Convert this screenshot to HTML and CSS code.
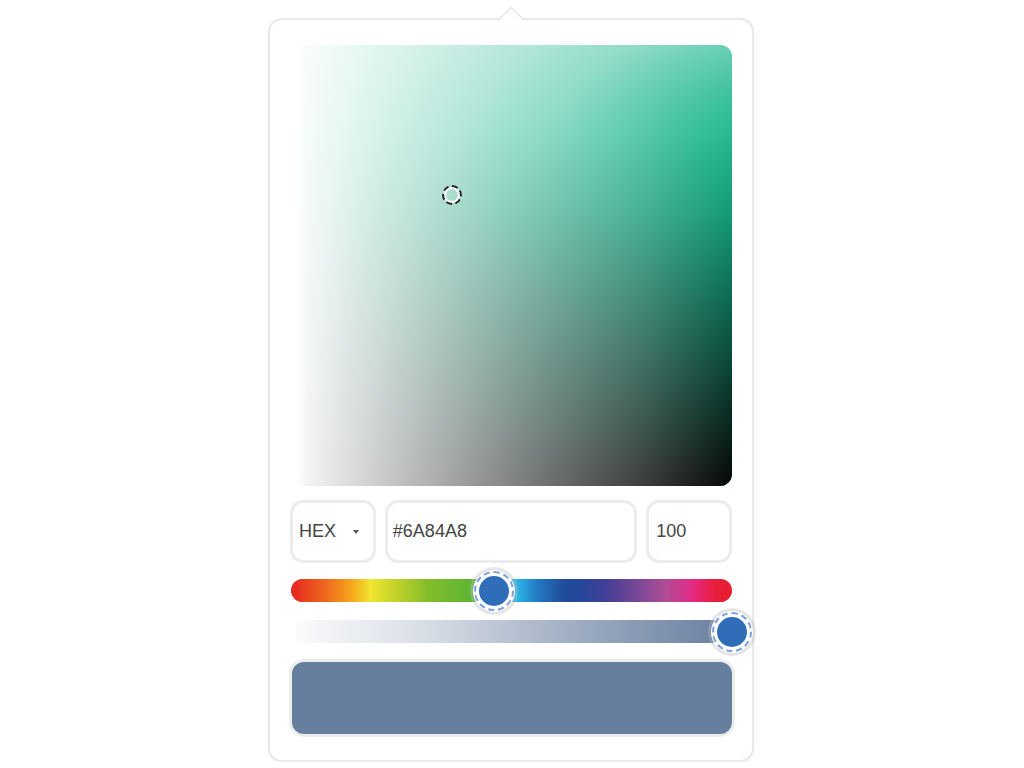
FILE: index.html
```html
<!DOCTYPE html>
<html>
<head>
<meta charset="utf-8">
<link rel="stylesheet" href="styles.css">
</head>
<body>
<div class="popover">
  <div class="arrow"></div>
  <div class="saturation">
    <div class="sat-layer sat-top"></div>
    <div class="sat-layer sat-peak"></div>
    <div class="sat-layer sat-black"></div>
    <div class="sat-layer sat-white"></div>
    <div class="sat-cursor" style="left: 156px; top: 150px;"></div>
  </div>
  <div class="inputs">
    <div class="field select"><span class="mode">HEX</span><span class="caret"></span></div>
    <div class="field hex">#6A84A8</div>
    <div class="field alpha">100</div>
  </div>
  <div class="slider hue">
    <div class="thumb" style="left: 46%;"></div>
  </div>
  <div class="slider alpha-track">
    <div class="thumb" style="left: 100%;"></div>
  </div>
  <div class="swatch"></div>
</div>
</body>
</html>
```

FILE: styles.css
```css
html, body {
  margin: 0;
  padding: 0;
  background: #ffffff;
  font-family: "Liberation Sans", Arial, sans-serif;
}

.popover {
  position: relative;
  box-sizing: border-box;
  width: 486px;
  height: 744px;
  margin: 18px auto 0 auto;
  left: -1px;
  border: 2px solid #e9e9e9;
  border-radius: 14px;
  background: #ffffff;
  box-shadow: 0 1px 3px rgba(0,0,0,0.06);
  padding: 25px 20px 26px 20px;
  display: flex;
  flex-direction: column;
}

.arrow {
  position: absolute;
  top: -10px;
  left: 231px;
  width: 18px;
  height: 18px;
  background: #ffffff;
  border-top: 2px solid #e9e9e9;
  border-left: 2px solid #e9e9e9;
  transform: rotate(45deg);
  border-top-left-radius: 3px;
}

.saturation {
  position: relative;
  height: 441px;
  margin-left: 6px;
  border-radius: 0 12px 12px 0;
  background: #14b48a;
  overflow: hidden;
}

.sat-layer {
  position: absolute;
  inset: 0;
}

.sat-top {
  background: linear-gradient(to bottom, rgba(255,255,255,0.38) 0%, rgba(255,255,255,0.15) 20%, rgba(255,255,255,0) 40%);
}

.sat-peak {
  background: radial-gradient(ellipse 35% 30% at 90% 28%, rgba(20,180,138,0.7) 0%, rgba(20,180,138,0) 100%);
}

.sat-black {
  background: linear-gradient(to top, #050505 0%, rgba(3,3,3,0.75) 18%, rgba(0,0,0,0.45) 40%, rgba(0,0,0,0.15) 62%, rgba(0,0,0,0) 80%);
}

.sat-white {
  background: linear-gradient(to right, #ffffff 0%, rgba(255,255,255,0.95) 3%, rgba(255,255,255,0.75) 24%, rgba(255,255,255,0.45) 55%, rgba(255,255,255,0.22) 80%, rgba(255,255,255,0) 100%);
}

.sat-cursor {
  position: absolute;
  width: 12px;
  height: 12px;
  border-radius: 50%;
  border: 2px solid #ffffff;
  outline: 2px dashed #222222;
  outline-offset: 0;
  transform: translate(-50%, -50%);
}

.inputs {
  display: flex;
  gap: 9px;
  margin-top: 14px;
  height: 63px;
}

.field {
  box-sizing: border-box;
  height: 63px;
  border: 3px solid #ececec;
  border-radius: 13px;
  display: flex;
  align-items: center;
  font-size: 18px;
  color: #444444;
  background: #ffffff;
}

.select {
  width: 86px;
  padding: 0 14px 0 6px;
  justify-content: space-between;
}

.caret {
  width: 0;
  height: 0;
  border-left: 3px solid transparent;
  border-right: 3px solid transparent;
  border-top: 4px solid #555555;
}

.hex {
  width: 253px;
  padding-left: 5px;
}

.alpha {
  width: 86px;
  padding-left: 7px;
}

.slider {
  position: relative;
  height: 23px;
  border-radius: 12px;
}

.hue {
  margin-top: 16px;
  margin-left: 1px;
  background: linear-gradient(to right,
    #e52421 0%, #ee6a1c 8%, #f6a91d 14%, #f1e530 18%,
    #c0d22b 24%, #83bd2a 31%, #61b632 40%, #6ab94e 44%,
    #4cb7a6 48%, #2cb7e8 51%, #2379c2 56%, #1f4b98 62%,
    #25469a 66%, #463f95 72%, #7c4896 79%, #b14c96 85%,
    #e32a84 91%, #e81d3f 96%, #e81d2a 100%);
}

.alpha-track {
  margin-top: 18px;
  margin-left: 6px;
  border-radius: 0 12px 12px 0;
  background: linear-gradient(to right, #fbfcfd 0%, #eef0f4 10%, #dfe4ea 25%, #bfc8d6 45%, #95a5bc 70%, #677f9f 100%);
}

.thumb {
  position: absolute;
  top: 50%;
  box-sizing: border-box;
  width: 42px;
  height: 42px;
  border-radius: 50%;
  background: #2f6db8;
  border: 6px solid #ffffff;
  outline: 2px dashed #7a9fdc;
  outline-offset: -3px;
  box-shadow: 0 0 0 3px rgba(200,200,200,0.35), 0 0 4px rgba(0,0,0,0.15);
  transform: translate(-50%, -50%);
}

.swatch {
  margin-top: 19px;
  margin-left: 2px;
  height: 72px;
  border-radius: 12px;
  background: #677f9f;
  box-shadow: 0 0 0 3px #ededed;
}
```
